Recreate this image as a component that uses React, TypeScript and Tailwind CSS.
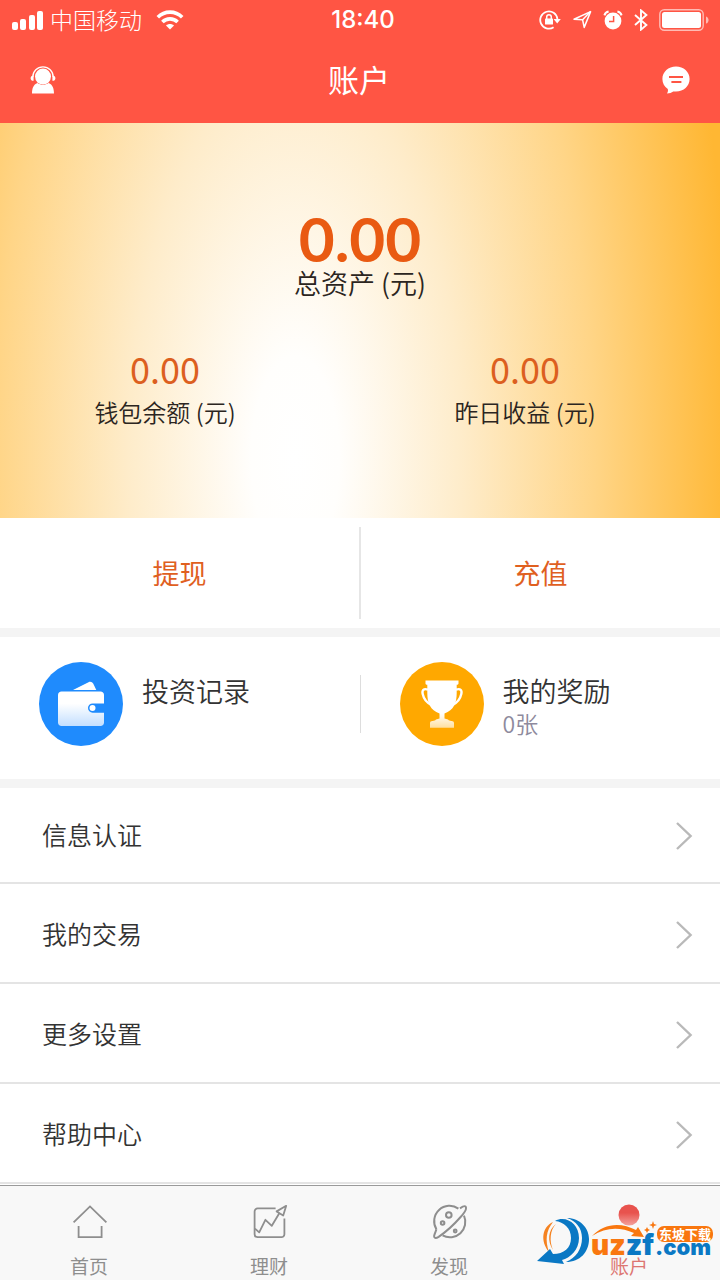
import type { ReactNode } from 'react';

const MENU_LINKS = [
  { title: '信息认证', url: '#verify' },
  { title: '我的交易', url: '#trades' },
  { title: '更多设置', url: '#settings' },
  { title: '帮助中心', url: '#help' },
];

const BALANCES = [
  { label: '钱包余额 (元)', value: '0.00' },
  { label: '昨日收益 (元)', value: '0.00' },
];

const SignalIcon = () => (
  <svg width="32" height="20" viewBox="0 0 32 20" fill="#fff">
    <rect x="0" y="12" width="6" height="8" rx="2" />
    <rect x="8" y="9" width="6" height="11" rx="2" />
    <rect x="17" y="5" width="6" height="15" rx="2" />
    <rect x="25" y="1" width="6" height="19" rx="2" />
  </svg>
);

const WifiIcon = () => (
  <svg width="28" height="20" viewBox="0 0 28 20" fill="none" stroke="#fff" strokeWidth="3.6">
    <path d="M1.8 7.2C8.6.4 19.4.4 26.2 7.2" />
    <path d="M6.4 12C10.6 7.8 17.4 7.8 21.6 12" />
    <path d="M14 19.6l-4-4.2c2.2-2 5.8-2 8 0z" fill="#fff" stroke="none" />
  </svg>
);

const RotationLockIcon = () => (
  <svg width="22" height="20" viewBox="0 0 22 20" fill="none" stroke="#fff" strokeWidth="1.8">
    <path d="M14.6 17.2A8.6 8.6 0 1 1 18.4 9" />
    <path d="M14.6 9h7.2l-3.6 4.6z" fill="#fff" stroke="none" />
    <rect x="6" y="8.6" width="8" height="6" rx="0.6" fill="#fff" stroke="none" />
    <path d="M7.7 9V7a2.3 2.3 0 0 1 4.6 0v2" strokeWidth="1.5" />
  </svg>
);

const LocationIcon = () => (
  <svg width="20" height="20" viewBox="0 0 20 20" fill="none" stroke="#fff" strokeWidth="1.5">
    <path d="M18.6 1.6L2 9.2l8.6.6 1.6 7.6z" strokeLinejoin="round" />
    <path d="M18.6 1.6l-8 8.2" />
  </svg>
);

const AlarmIcon = () => (
  <svg width="20" height="20" viewBox="0 0 20 20" fill="none">
    <circle cx="10" cy="11" r="8.4" fill="#fff" />
    <path d="M10.6 6v5.6H6" stroke="#ff5544" strokeWidth="1.5" />
    <path d="M1.4 5.4C2 3.4 3.6 2 5.6 1.6M18.6 5.4C18 3.4 16.4 2 14.4 1.6" stroke="#fff" strokeWidth="2" />
  </svg>
);

const BluetoothIcon = () => (
  <svg width="14" height="22" viewBox="0 0 14 22" fill="none" stroke="#fff" strokeWidth="1.9">
    <path d="M1 6l11.4 10L7 20.6V1.4L12.4 6 1 16" />
  </svg>
);

const BatteryIcon = () => (
  <svg width="51" height="22" viewBox="0 0 51 22" fill="none">
    <rect x="0.8" y="0.8" width="43.4" height="20.4" rx="4.5" stroke="#fff" strokeOpacity="0.6" strokeWidth="1.4" />
    <rect x="3" y="3" width="39" height="16" rx="2.5" fill="#fff" />
    <path d="M47 7.4c3.4 1 3.4 6.2 0 7.2z" fill="#fff" fillOpacity="0.6" />
  </svg>
);

const ServiceIcon = () => (
  <svg width="26" height="28" viewBox="0 0 26 28" fill="none">
    <path d="M2.8 11a10 10 0 0 1 20.4 0" stroke="#fff" strokeWidth="1.3" />
    <circle cx="13" cy="10.6" r="8" fill="#fff" />
    <path d="M3.6 9.4v5.4C1.6 14.8.6 13.8.6 12.2s1-2.6 3-2.8zM22.4 9.4v5.4c2 0 3-1 3-2.6s-1-2.6-3-2.8z" fill="#fff" />
    <path d="M2 27.4c0-5 1.4-8.8 5.4-10.4 3.4 2.4 7.8 2.4 11.2 0 4 1.6 5.4 5.4 5.4 10.4z" fill="#fff" />
  </svg>
);

const ChatIcon = () => (
  <svg width="28" height="28" viewBox="0 0 28 28" fill="none">
    <path
      d="M14 .6C6.4.6.4 6 .4 13c0 4.2 2 7.8 5.4 10 .4 1.6.2 3-.8 4.4 2.6-.2 4.6-.8 6.2-2 .9.1 1.8.2 2.8.2 7.6 0 13.6-5.6 13.6-12.6S21.6.6 14 .6z"
      fill="#fff"
    />
    <path d="M7 11h14M9.4 16h10" stroke="#ff5544" strokeWidth="1.8" />
  </svg>
);

const WalletIcon = () => (
  <svg className="size-[84px] shrink-0" viewBox="0 0 84 84">
    <defs>
      <linearGradient id="wallet" x1="0" y1="0" x2="0" y2="1">
        <stop offset="0.35" stopColor="#fff" />
        <stop offset="1" stopColor="#c3dfff" />
      </linearGradient>
    </defs>
    <circle cx="42" cy="42" r="42" fill="#1f8bfd" />
    <path d="M34 28l15.5-7.8c2-.9 3.8-.2 4.800 1.6l3 6.2z" fill="#fff" />
    <path
      d="M22.5 29.6h39c2 0 3.500 1.500 3.500 3.500v8.400H53.600a4.600 4.600 0 0 0 0 9.200H65V60.500c0 2-1.500 3.500-3.500 3.500h-39c-2 0-3.500-1.500-3.500-3.500V33.100c0-2 1.500-3.500 3.500-3.500z"
      fill="url(#wallet)"
    />
    <circle cx="53.5" cy="46" r="3" fill="#fff" />
  </svg>
);

const TrophyIcon = () => (
  <svg className="size-[84px] shrink-0" viewBox="0 0 84 84">
    <defs>
      <linearGradient id="trophy" x1="0" y1="0" x2="0" y2="1">
        <stop offset="0.7" stopColor="#fff" />
        <stop offset="1" stopColor="#ffdf9e" />
      </linearGradient>
    </defs>
    <circle cx="42" cy="42" r="42" fill="#ffa800" />
    <path
      d="M25.5 18.4h33v3c0 .8-.8 1.4-1.800 1.4v8.2c0 10-3 17.200-12.200 20.400v5l3.500 1.200c1 1 1.500 1.400 3.500 1.400 1.600 0 2.500.8 2.500 2.400v4.400H30v-4.400c0-1.600.9-2.400 2.500-2.400 2 0 2.500-.4 3.500-1.400l3.500-1.200v-5C30.300 48.200 27.300 41 27.300 31v-8.200c-1 0-1.800-.6-1.800-1.400z"
      fill="url(#trophy)"
    />
    <path
      d="M28 27.6c-4.5-1.4-6.200.4-5.300 4.400 1 4.600 3.600 8.300 8.300 10.600M56 27.600c4.500-1.400 6.200.4 5.300 4.400-1 4.600-3.600 8.300-8.300 10.600"
      fill="none"
      stroke="#fff"
      strokeWidth="2.4"
    />
  </svg>
);

const ChevronIcon = () => (
  <svg className="box-content pt-1" width="18" height="30" viewBox="0 0 18 30" fill="none" stroke="#b9b9b9" strokeWidth="2.4">
    <path d="M2 2l13.6 13L2 28" />
  </svg>
);

const HomeIcon = () => (
  <svg width="36" height="36" viewBox="0 0 36 36" fill="none" stroke="#8e8e8e" strokeWidth="1.8">
    <path d="M1.6 18.4L18 2.4l16.4 16" />
    <path d="M6.6 22v11.2h23V22" />
  </svg>
);

const FinanceIcon = () => (
  <svg width="36" height="36" viewBox="0 0 36 36" fill="none" stroke="#8e8e8e" strokeWidth="1.8" strokeLinejoin="round">
    <path d="M23.6 4.4H5.6a3 3 0 0 0-3 3v22.8a3 3 0 0 0 3 3h23.8a3 3 0 0 0 3-3V14.6" />
    <path d="M3 24.6l4.2 3.8 6.2-12.6 6.4 6 7.8-13" />
    <path d="M34.2 1.8l-9.6 5.6 6.6 4.2z" />
  </svg>
);

const DiscoverIcon = () => (
  <svg width="36" height="36" viewBox="0 0 36 36" fill="none" stroke="#8e8e8e" strokeWidth="2">
    <path d="M4.4 25.2A15.4 15.4 0 0 1 26.4 4.6M32 11.6A15.4 15.4 0 0 1 10.6 31.4" />
    <path d="M28 4.4c2.8-2 5-2.6 5.6-1.8 1.2 1.6-1 6-5 10.4C23 19.4 13 28.6 6.6 32.8c-3.2 2-4.8 1.2-4.4-1.2.4-2 1.4-3.6 2.2-6.4" />
    <circle cx="16.8" cy="11" r="2.8" />
    <circle cx="10.6" cy="19" r="1.8" />
    <circle cx="23.2" cy="27" r="1.4" />
  </svg>
);

const AccountIcon = () => (
  <svg width="36" height="36" viewBox="0 0 36 36">
    <defs>
      <linearGradient id="account" x1="0" y1="0" x2="0" y2="1">
        <stop offset="0.4" stopColor="#e8534e" />
        <stop offset="1" stopColor="#f3a19c" />
      </linearGradient>
    </defs>
    <circle cx="17" cy="11" r="10.5" fill="url(#account)" />
  </svg>
);

const TABS = [
  { title: '首页', url: '#home', icon: <HomeIcon />, color: 'text-[#8e8e8e]' },
  { title: '理财', url: '#finance', icon: <FinanceIcon />, color: 'text-[#8e8e8e]' },
  { title: '发现', url: '#discover', icon: <DiscoverIcon />, color: 'text-[#8e8e8e]' },
  { title: '账户', url: '#account', icon: <AccountIcon />, color: 'text-[#dd7672]' },
];

const StatusBar = () => (
  <div className="grid grid-cols-3 items-center pl-3 pr-[10px]">
    <div className="flex items-center">
      <SignalIcon />
      <span className="ml-[6px] pb-[2px] text-[23px] leading-9 font-light">中国移动</span>
      <span className="ml-[14px]">
        <WifiIcon />
      </span>
    </div>
    <p className="pl-1 text-center text-[24px] leading-10 font-medium font-['Inter',sans-serif]">18:40</p>
    <div className="flex items-center justify-end gap-[11px]">
      <RotationLockIcon />
      <LocationIcon />
      <AlarmIcon />
      <BluetoothIcon />
      <BatteryIcon />
    </div>
  </div>
);

const Header = () => (
  <header className="bg-[#ff5544] text-white">
    <StatusBar />
    <div className="flex items-center justify-between px-[30px] pb-[3px]">
      <button type="button" aria-label="客服">
        <ServiceIcon />
      </button>
      <h1 className="pb-[2px] text-[31px] leading-[78px]">账户</h1>
      <button type="button" aria-label="消息">
        <ChatIcon />
      </button>
    </div>
  </header>
);

const Summary = () => (
  <section className="pt-[85px] pb-[82px] text-center text-[#2b2521] bg-[radial-gradient(61%_260%_at_41%_85%,#ffffff_0%,#fffefc_10%,#feecca_38%,#ffd587_68%,#ffb733_100%)]">
    <p className="text-[62px] leading-[60px] font-bold text-[#e95a12] font-['Lato',sans-serif]">0.00</p>
    <p className="text-[27px] leading-[30px] font-[350]">总资产 (元)</p>
    <div className="mt-[50px] grid grid-cols-2">
      {BALANCES.map((item) => (
        <div key={item.label} className="pr-[30px]">
          <p className="text-[36px] leading-10 text-[#dc5f20]">{item.value}</p>
          <p className="text-[24px] leading-12 font-[350]">{item.label}</p>
        </div>
      ))}
    </div>
  </section>
);

const Actions = () => (
  <section className="flex items-center py-[9px] bg-white text-[27px] text-[#e0601f]">
    <button type="button" className="flex-1 leading-[92px] border-r-2 border-[#e6e6e6]">
      提现
    </button>
    <button type="button" className="flex-1 leading-[92px]">
      充值
    </button>
  </section>
);

const RecordLink = ({ icon, title, note }: { icon: ReactNode; title: string; note?: string }) => (
  <a href="#records" className="flex-1 flex gap-[19px] pl-[39px]">
    {icon}
    <div className="pt-3">
      <p className="text-[27px] leading-[33px] text-[#333333] font-[350]">{title}</p>
      {note && <p className="text-[23px] leading-[33px] text-[#8e8a9d] font-[350]">{note}</p>}
    </div>
  </a>
);

const Records = () => (
  <section className="flex items-start pt-[25px] pb-[33px] bg-white">
    <RecordLink icon={<WalletIcon />} title="投资记录" />
    <div className="self-center w-px h-[58px] bg-[#dddddd]" />
    <RecordLink icon={<TrophyIcon />} title="我的奖励" note="0张" />
  </section>
);

const Menu = () => (
  <nav className="bg-white">
    {MENU_LINKS.map((link) => (
      <a
        key={link.url}
        href={link.url}
        className="flex items-center justify-between py-[29px] first:pt-[26px] first:pb-7 pl-[42px] pr-[27px] border-b-2 border-[#e4e4e4] text-[25px] leading-10 text-[#333333] font-[350]"
      >
        {link.title}
        <ChevronIcon />
      </a>
    ))}
  </nav>
);

const Watermark = () => (
  <svg className="absolute right-1 bottom-3 pointer-events-none" width="180" height="52" viewBox="0 0 180 52">
    <path d="M17 6C6 11 4 25 13 36c-4-12-3-21 4-30z" fill="#f58220" />
    <path d="M20 8c-6 6-7 17-3 26-6-9-5-20 3-26z" fill="#f58220" />
    <path d="M19 5C30-1 43 8 43 22c0 12-9 20-17 22l2 4L1 45l13-12 3 5c11 0 18-6 18-16S28 6 19 5z" fill="#0a78c4" />
    <path d="M31 2c13 0 22 10 22 21 0 13-9 23-23 23 10-4 16-13 16-24C46 12 40 5 31 2z" fill="#0a78c4" />
    <path d="M56 20c12-13 29-14 44-6l2-3 6 10-13-1 3-3c-14-6-28-6-42 3z" fill="#f9770f" />
    <text x="55" y="39" fontSize="28" fontWeight="900" fontFamily="Inter, sans-serif" fill="#f9770f">
      uz<tspan fill="#0a78c4">zf</tspan>
    </text>
    <text x="119" y="39" fontSize="22" fontWeight="900" fontFamily="Inter, sans-serif" fill="#0a78c4">
      .com
    </text>
    <rect x="121" y="10" width="56" height="16" rx="7" fill="#f9770f" />
    <text x="123" y="23" fontSize="13" fontWeight="700" fontFamily="Noto Sans CJK SC, sans-serif" fill="#fff">
      东坡下载
    </text>
    <path d="M117 5l1 3 3 1-3 1-1 3-1-3-3-1 3-1zM111 11l1 2 2 1-2 1-1 2-1-2-2-1 2-1z" fill="#f9770f" />
  </svg>
);

const TabBar = () => (
  <nav className="relative mt-px grid grid-cols-4 border-t border-[#9a9a9a] bg-[#f8f8f8]">
    {TABS.map((tab) => (
      <a key={tab.url} href={tab.url} className={`flex flex-col items-center pt-[18px] ${tab.color}`}>
        {tab.icon}
        <span className="pt-3 pr-[2px] text-[19px] leading-7">{tab.title}</span>
      </a>
    ))}
    <Watermark />
  </nav>
);

const App = () => {
  return (
    <div className="min-h-screen flex flex-col bg-white font-['Noto_Sans_CJK_SC',sans-serif]">
      <Header />
      <main className="flex-1">
        <Summary />
        <Actions />
        <div className="h-[9px] bg-[#f4f4f4]" />
        <Records />
        <div className="h-[9px] bg-[#f4f4f4]" />
        <Menu />
      </main>
      <TabBar />
    </div>
  );
};

export default App;
